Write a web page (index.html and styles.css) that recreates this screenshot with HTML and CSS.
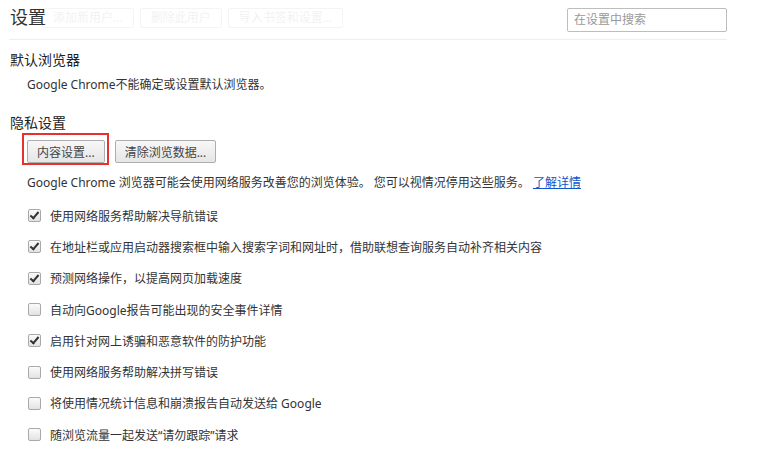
FILE: index.html
```html
<!DOCTYPE html>
<html>
<head>
  <meta charset="UTF-8">
  <title>设置</title>
  <link rel="stylesheet" href="styles.css">
</head>
<body>
  <div class="page">
    <div class="header">
      <h1 class="title">设置</h1>
      <div class="ghost">
        <span>添加新用户...</span>
        <span>删除此用户</span>
        <span>导入书签和设置...</span>
      </div>
      <div class="search">在设置中搜索</div>
    </div>

    <div class="section first">
      <h3>默认浏览器</h3>
      <p class="text">Google Chrome不能确定或设置默认浏览器。</p>
    </div>

    <div class="section">
      <h3>隐私设置</h3>
      <div class="buttons">
        <button class="btn marked">内容设置...</button>
        <button class="btn">清除浏览数据...</button>
      </div>
      <p class="text desc">Google Chrome 浏览器可能会使用网络服务改善您的浏览体验。 您可以视情况停用这些服务。 <a href="javascript:;">了解详情</a></p>
      <ul class="checks">
        <li><span class="box on"></span>使用网络服务帮助解决导航错误</li>
        <li><span class="box on"></span>在地址栏或应用启动器搜索框中输入搜索字词和网址时，借助联想查询服务自动补齐相关内容</li>
        <li><span class="box on"></span>预测网络操作，以提高网页加载速度</li>
        <li><span class="box"></span>自动向Google报告可能出现的安全事件详情</li>
        <li><span class="box on"></span>启用针对网上诱骗和恶意软件的防护功能</li>
        <li><span class="box"></span>使用网络服务帮助解决拼写错误</li>
        <li><span class="box"></span>将使用情况统计信息和崩溃报告自动发送给 Google</li>
        <li><span class="box"></span>随浏览流量一起发送“请勿跟踪”请求</li>
      </ul>
    </div>
  </div>
</body>
</html>
```

FILE: styles.css
```css
* {
  margin: 0;
  padding: 0;
}
body {
  background: #fff;
  font-family: "Noto Sans", "Noto Sans CJK SC", sans-serif;
  color: #333;
}
a {
  color: #15c;
  text-decoration: underline;
}
.page {
  padding-left: 9px;
  width: 718px;
}
.header {
  position: relative;
  height: 39px;
  border-bottom: 1px solid #eee;
  display: flex;
  justify-content: space-between;
  align-items: flex-start;
}
.header .title {
  font-size: 18px;
  font-weight: normal;
  line-height: 24px;
  margin: 5px 0 0 1px;
  color: #333;
  position: relative;
  z-index: 2;
}
.header .ghost {
  position: absolute;
  left: 33px;
  top: 8px;
  display: flex;
  gap: 6px;
  opacity: 0.05;
  z-index: 1;
}
.header .ghost span {
  display: block;
  height: 18px;
  line-height: 18px;
  padding: 0 10px;
  border: 1px solid #444;
  border-radius: 2px;
  font-size: 12px;
  color: #000;
}
.header .search {
  margin-top: 8px;
  width: 152px;
  height: 22px;
  line-height: 22px;
  padding-left: 6px;
  border: 1px solid #bdbdbd;
  border-radius: 2px;
  font-size: 12px;
  color: #999;
}
.section h3 {
  font-size: 14px;
  font-weight: normal;
  line-height: 20px;
  color: #222;
  margin-left: 1px;
}
.section.first h3 {
  margin-top: 10px;
}
.text {
  font-size: 12px;
  line-height: 18px;
  margin-left: 18px;
  color: #333;
}
.section .text {
  margin-top: 6px;
}
.section + .section h3 {
  margin-top: 19px;
}
.buttons {
  display: flex;
  gap: 10px;
  margin: 7px 0 0 18px;
}
.btn {
  position: relative;
  height: 23px;
  padding: 0 9px;
  font-family: inherit;
  font-size: 12px;
  color: #444;
  border: 1px solid #adadad;
  border-radius: 2px;
  background: linear-gradient(#f7f7f7, #e6e6e6);
}
.btn.marked::after {
  content: "";
  position: absolute;
  left: -6px;
  top: -8px;
  right: -5px;
  bottom: -3px;
  border: 2px solid #e8312f;
}
.section .desc {
  margin-top: 11px;
}
.checks {
  list-style: none;
  margin: 8px 0 0 19px;
}
.checks li {
  display: flex;
  align-items: center;
  height: 31.3px;
  font-size: 12px;
  color: #333;
}
.checks .box {
  width: 11px;
  height: 11px;
  margin-right: 9px;
  border: 1px solid #a9a9a9;
  border-radius: 2px;
  background: linear-gradient(#fbfbfb, #e2e2e2);
  position: relative;
}
.checks .box.on::after {
  content: "";
  position: absolute;
  left: 3px;
  top: 0px;
  width: 3px;
  height: 7px;
  border: solid #333;
  border-width: 0 2px 2px 0;
  transform: rotate(40deg);
}
```
